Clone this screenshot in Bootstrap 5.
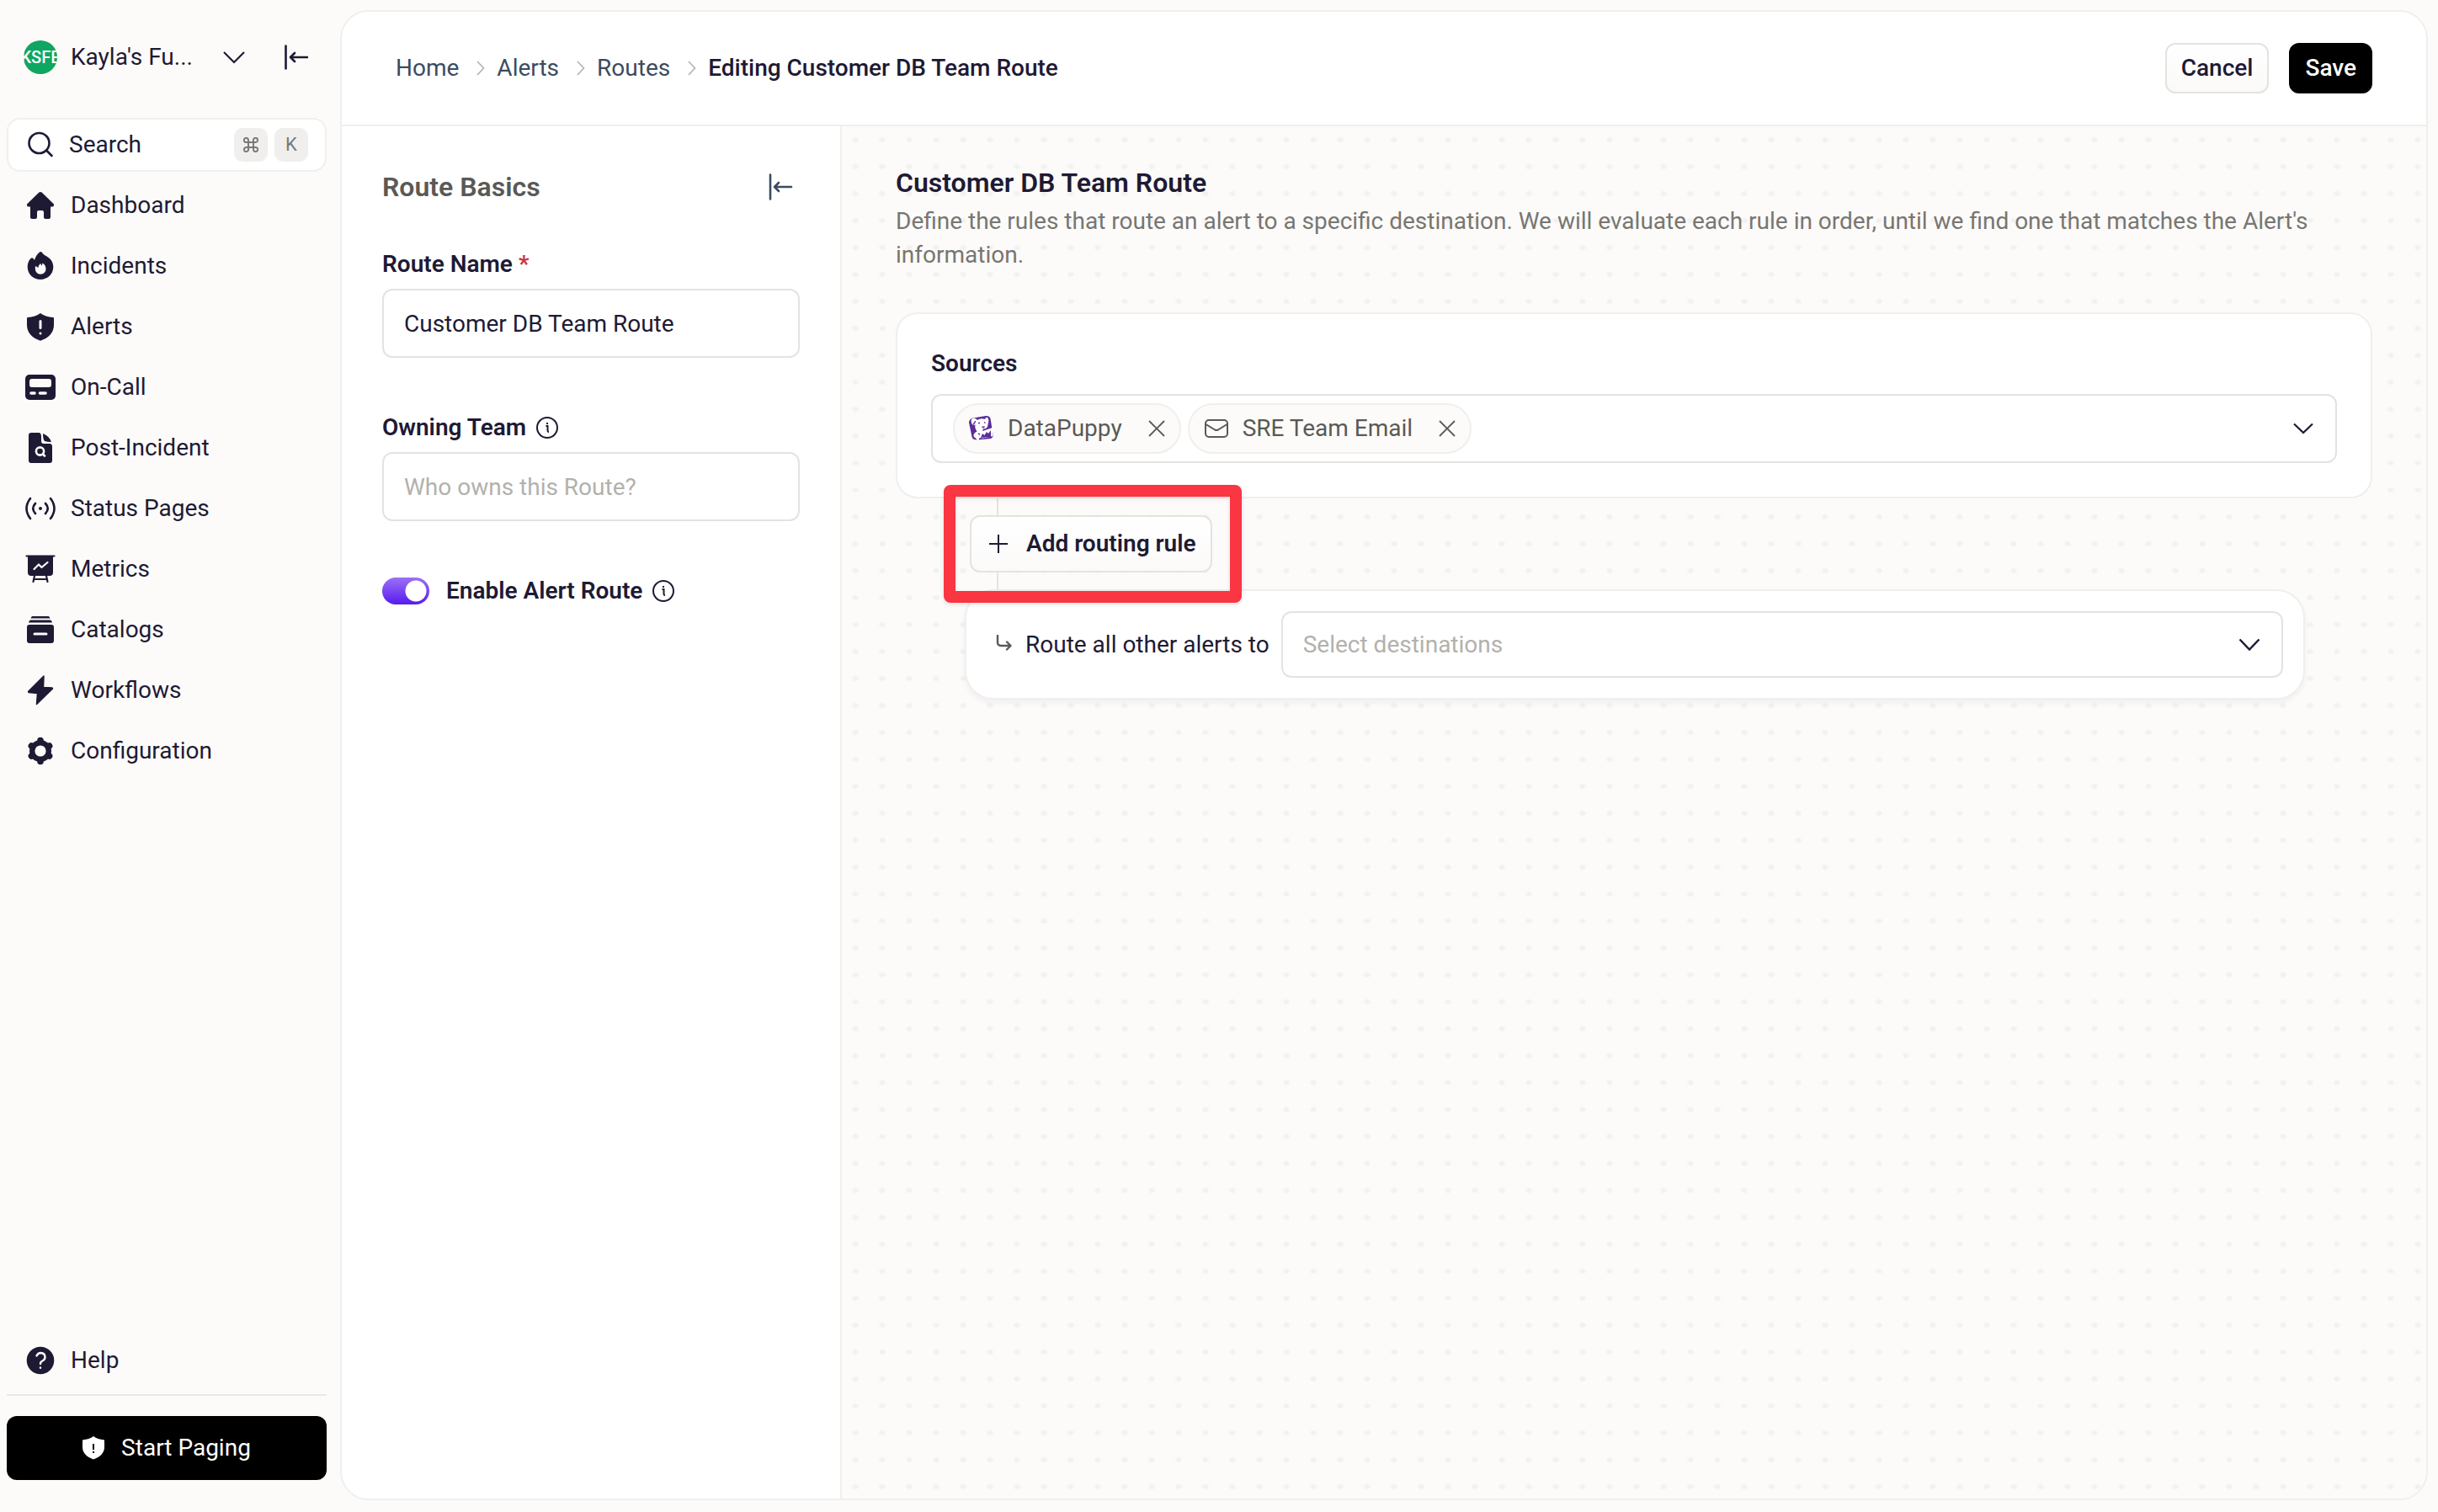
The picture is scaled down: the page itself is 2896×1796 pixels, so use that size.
<!DOCTYPE html>
<html lang="en">
<head>
<meta charset="utf-8">
<meta name="viewport" content="width=device-width, initial-scale=1">
<title>Editing Customer DB Team Route</title>
<link href="https://cdn.jsdelivr.net/npm/bootstrap@5.3.0/dist/css/bootstrap.min.css" rel="stylesheet">
<style>
:root{--ink:#1e1a34;--paper:#fcfbf9;--line:#f0efee;--field:#e4e3df;--slate:#3d4b60}
body{font-family:Roboto,"Liberation Sans",sans-serif;font-size:28px;line-height:40px;color:var(--ink);background:var(--paper)}
svg{display:block;flex:none}
a{color:inherit;text-decoration:none}
.sidebar{width:404px;padding:48px 16px 38px 8px;flex:none}
.workspace{padding:0 22px 0 20px;margin-bottom:52px;gap:16px}
.avatar{width:40px;height:40px;border-radius:50%;background:#0fa661;color:#fff;font-size:20px;font-weight:500;overflow:hidden;flex:none}
.plain{border:0;background:none;padding:0;color:inherit}
.fold{margin-left:29px}
.searchbox{height:64px;border:2px solid var(--line);border-radius:16px;background:#fff;padding:0 20px;margin-bottom:4px;color:inherit}
.keycap{width:40px;height:40px;border-radius:10px;background:#f0efee;color:#7a7976;font-size:22px;font-family:inherit;padding:0}
.side-link{height:72px;padding-left:22px;gap:18px}
.rule{height:2px;background:#e5e7ea;margin:4px 0 24px}
.paging{height:76px;border-radius:12px;background:#000;color:#fff;border:0;gap:20px}
.panel{margin:12px 12px 14px 0;border:2px solid var(--line);border-radius:34px;background:#fff;overflow:hidden}
.topbar{height:136px;border-bottom:2px solid var(--line);padding:0 64px}
.crumbs{gap:14px;color:var(--slate)}
.crumbs svg{margin-left:7px}
.crumbs .current{color:var(--ink);font-weight:500}
.action{height:60px;border-radius:12px;padding:0 17px;font-weight:500;border:2px solid var(--field);background:linear-gradient(#fff,#fbfaf9);color:var(--ink)}
.action-dark{background:#000;border-color:#000;color:#fff}
.basics{width:594px;flex:none;border-right:2px solid var(--line);padding:52px 48px}
.basics h2{font-size:32px;line-height:40px;font-weight:600;color:#5a5955;margin:0}
.basics-head{margin-bottom:52px;padding-right:8px}
.basics-head .plain{color:var(--slate)}
.field-label{font-weight:600;margin-bottom:9px;gap:12px}
.required{color:#c9363f}
.field,.field:focus{height:82px;border:2px solid var(--field);border-radius:12px;font-size:28px;padding:0 24px;color:var(--ink);background-color:#fff;margin-bottom:63px}
.field::placeholder{color:#b2b1ac;opacity:1}
.toggle.form-check-input{width:56px;height:32px;margin:0;border:0;border-radius:16px;background:radial-gradient(circle at 40px 16px,#fff 12px,transparent 13px),linear-gradient(#9c70f7,#571bee)}
.canvas{padding:45px 64px;background:radial-gradient(ellipse 5px 4px at center,#f2f1f0 40%,transparent 100%) 0 0/32px 32px,var(--paper)}
.canvas h1{font-size:32px;line-height:44px;font-weight:600;margin:0 0 4px}
.intro{color:#777672;margin-bottom:48px}
.sources{border:2px solid var(--line);border-radius:26px;background:#fff;padding:39px 40px 40px}
.sources h2{font-size:28px;line-height:40px;font-weight:600;margin:0 0 16px}
.picker{height:82px;border:2px solid var(--field);border-radius:12px;padding:0 26px 0 24px;gap:8px}
.chip{height:60px;border:2px solid var(--line);border-radius:30px;background:var(--paper);padding:0 17px;color:#5a5955;gap:16px}
.chip .plain{margin-left:15px}
.step{padding:20px 0 20px 88px}
.step::before{content:"";position:absolute;left:120px;top:0;bottom:0;width:2px;background:var(--field)}
.add{height:68px;border:2px solid var(--field);border-radius:12px;background:linear-gradient(#fff,#fbfaf9);padding:0 17px 0 19px;font-weight:600;color:var(--ink);gap:20px}
.highlight{position:absolute;left:57px;top:-16px;width:354px;height:140px;border:14px solid #f93642;border-radius:8px;box-shadow:0 2px 5px rgba(0,0,0,.12),inset 0 2px 5px rgba(0,0,0,.12);pointer-events:none;z-index:2}
.fallback{margin:0 80px 0 82px;border:2px solid var(--line);border-radius:34px;background:#fff;padding:24px 24px 24px 34px;box-shadow:0 4px 6px rgba(30,26,52,.05)}
.fallback label{margin-right:14px}
.dest,.dest:focus{height:79px;border:2px solid var(--field);border-radius:12px;padding:0 24px;font-size:28px;color:#b2b1ac;background:#fff url("data:image/svg+xml,%3Csvg xmlns='http://www.w3.org/2000/svg' viewBox='0 0 26 16'%3E%3Cpath d='M1.5 1.5 13 13.5 24.5 1.5' fill='none' stroke='%231e1a34' stroke-width='2.4'/%3E%3C/svg%3E") no-repeat right 25px center/26px 16px}
</style>
<script src="https://cdn.jsdelivr.net/npm/bootstrap@5.3.0/dist/js/bootstrap.bundle.min.js" defer></script>
</head>
<body class="d-flex min-vh-100">
<aside class="sidebar d-flex flex-column">
  <div class="workspace d-flex align-items-center">
    <span class="avatar d-flex align-items-center justify-content-center">KSFE</span>
    <button class="plain d-flex align-items-center flex-grow-1 justify-content-between" type="button">Kayla's Fu...
      <svg width="26" height="16" viewBox="0 0 26 16" fill="none" stroke="currentColor" stroke-width="2.2"><path d="M1 2 13 14 25 2"/></svg></button>
    <button class="plain fold" type="button" aria-label="Collapse sidebar"><svg width="30" height="32" viewBox="0 0 30 32" fill="none" stroke="currentColor" stroke-width="2.6" stroke-linecap="round" stroke-linejoin="round"><path d="M3.500 2.500v27M29 16H9M14 11l-5 5 5 5"/></svg></button>
  </div>
  <button class="searchbox d-flex align-items-center text-start" type="button">
    <svg width="36" height="36" viewBox="0 0 36 36" fill="none" stroke="currentColor" stroke-width="2.6" stroke-linecap="round"><circle cx="16.500" cy="16" r="12"/><path d="M25 24.500 31.500 31"/></svg>
    <span class="flex-grow-1 ms-3">Search</span>
    <kbd class="keycap d-flex align-items-center justify-content-center me-2"><svg width="18" height="18" viewBox="0 0 18 18" fill="none" stroke="currentColor" stroke-width="2"><path d="M6 6h6v6H6zM6 6H4a2.600 2.600 0 1 1 2-2.500zM12 6V4a2.600 2.600 0 1 1 2.500 2zM12 12h2a2.600 2.600 0 1 1-2 2.500zM6 12v2a2.600 2.600 0 1 1-2.500-2z"/></svg></kbd>
    <kbd class="keycap d-flex align-items-center justify-content-center">K</kbd>
  </button>
  <nav class="d-flex flex-column flex-grow-1">
    <a href="#" class="side-link d-flex align-items-center"><svg width="36" height="36" viewBox="0 0 36 36" fill="currentColor"><path d="M16.400 2.600q1.600-1.400 3.200 0L33.500 16q1.200 1.400-.2 3.200l-3.300.6V32q0 2-2 2h-4q-2 0-2-2v-6q0-2-2-2h-4q-2 0-2 2v6q0 2-2 2H8q-2 0-2-2V19.800l-3.300-.6Q1.300 17.400 2.500 16z"/></svg>Dashboard</a>
    <a href="#" class="side-link d-flex align-items-center"><svg width="36" height="36" viewBox="0 0 36 36" fill="currentColor" fill-rule="evenodd"><path d="M17 1.500q1.500-1 3 .5c1 2 3 3 5.500 4.500 5 3 7.800 7 7.800 12.500C33.300 27.500 26.500 34 18 34S2.700 27.500 2.700 19c0-4 1.300-7.500 3.800-10 1-1 2-1 3 0l1.500 2c1-4 3-7 6-9.500zM18 15c-1.500 1.500-2.500 3-2.500 5-1-.8-2-1.500-3.500-1.800-1 5 1.500 9.500 6 9.500 4 0 6.500-2.800 6.500-6.200 0-3.500-1.500-5.500-4-7-.3 1.500-.5 2.500-1 3z"/></svg>Incidents</a>
    <a href="#" class="side-link d-flex align-items-center"><svg width="36" height="36" viewBox="0 0 36 36"><path fill="currentColor" d="M18 2c4 3 9 4.800 15 5q1 0 1 1v8c0 9-6 15.500-16 18.700C8 31.500 2 25 2 16V8q0-1 1-1c6-.2 11-2 15-5z"/><path stroke="#fcfbf9" stroke-width="3" stroke-linecap="round" d="M18 11.500v8M18 26v.1"/></svg>Alerts</a>
    <a href="#" class="side-link d-flex align-items-center"><svg width="36" height="36" viewBox="0 0 36 36"><rect y="3" width="36" height="30" rx="5" fill="currentColor"/><path fill="#fcfbf9" d="M8 8h20q3 0 3 3v4q0 3-3 3H8q-3 0-3-3v-4q0-3 3-3z"/><path stroke="#fcfbf9" stroke-width="3.600" stroke-linecap="round" d="M7 25h4M17.500 25H24"/></svg>On-Call</a>
    <a href="#" class="side-link d-flex align-items-center"><svg width="36" height="36" viewBox="0 0 36 36"><path fill="currentColor" d="M7 0h10q2 1 2 4v6q0 3 3 3h8q2 1 2 3v17q0 3-3 3H7q-3 0-3-3V3q0-3 3-3zM21 1c5 2 8.500 5.500 10 10q-5 0-8-1-2-2-2-9z"/><g fill="none" stroke="#fcfbf9" stroke-width="2.600" stroke-linecap="round"><circle cx="17.500" cy="22" r="4.600"/><path d="m21 25.500 2 2"/></g></svg>Post-Incident</a>
    <a href="#" class="side-link d-flex align-items-center"><svg width="36" height="36" viewBox="0 0 36 36" fill="none" stroke="currentColor" stroke-width="2.600" stroke-linecap="round"><path d="M6 6q-9 12 0 24M12 12q-5.500 6 0 12M30 6q9 12 0 24M24 12q5.500 6 0 12"/><circle cx="18" cy="18" r="2" fill="currentColor" stroke="none"/></svg>Status Pages</a>
    <a href="#" class="side-link d-flex align-items-center"><svg width="36" height="36" viewBox="0 0 36 36" fill="none" stroke-linecap="round" stroke-linejoin="round"><path fill="currentColor" d="M3 2h30v20q0 4-4 4H7q-4 0-4-4z"/><path stroke="currentColor" stroke-width="2.200" d="M1.500 2.500h33M11 26l-1.500 7M25 26l1.500 7M10.500 30h15"/><path stroke="#fcfbf9" stroke-width="2.200" d="m10.500 18 5.500-5.500 3.500 3.500 7-6"/></svg>Metrics</a>
    <a href="#" class="side-link d-flex align-items-center"><svg width="36" height="36" viewBox="0 0 36 36"><path fill="currentColor" d="M8.500 2h19q1.500 0 2 2.500h-23q.5-2.500 2-2.500zM6 6.500h24q1.500.5 2 3H4q.5-2.500 2-3zM5 12h26q3 0 3 3v16q0 3-3 3H5q-3 0-3-3V15q0-3 3-3z"/><path stroke="#fcfbf9" stroke-width="3" stroke-linecap="round" d="M11 23h14"/></svg>Catalogs</a>
    <a href="#" class="side-link d-flex align-items-center"><svg width="36" height="36" viewBox="0 0 36 36" fill="currentColor" stroke="currentColor" stroke-width="1.500" stroke-linejoin="round"><path d="M22 1 3.500 19.500 4 20.500l10.500 1L13.500 34.500 32.500 16l-.5-1-10.500-.5z"/></svg>Workflows</a>
    <a href="#" class="side-link d-flex align-items-center"><svg width="36" height="36" viewBox="0 0 36 36"><circle cx="18" cy="18" r="9.800" fill="none" stroke="currentColor" stroke-width="6.400"/><g stroke="currentColor" stroke-width="7.600" stroke-linecap="round"><path d="M18 5.600v1M18 29.400v1M7.400 11.900l.8.500M27.800 23.600l.8.500M7.400 24.100l.8-.5M27.800 12.400l.8-.5"/></g></svg>Configuration</a>
  </nav>
  <a href="#" class="side-link d-flex align-items-center"><svg width="36" height="36" viewBox="0 0 36 36"><circle cx="18" cy="18" r="16.300" fill="currentColor"/><path fill="none" stroke="#fcfbf9" stroke-width="2.400" stroke-linecap="round" stroke-linejoin="round" d="M13.500 12.500q1.500-3.500 5-3.500 5 .5 5 5 0 3-3 4.500-2.500 1-2.500 3.500M18 26.500v.2"/></svg>Help</a>
  <div class="rule"></div>
  <button class="paging d-flex align-items-center justify-content-center" type="button"><svg width="26" height="28" viewBox="0 0 26 28"><path fill="#fff" d="M13 0c3.500 2.700 7.500 4 12 4.200q1 0 1 1V13c0 7-5 11.500-13 14.500C5 24.500 0 20 0 13V5.200q0-1 1-1C5.500 4 9.500 2.700 13 0z"/><path stroke="#000" stroke-width="2" d="M13 9v7M13 18v2"/></svg>Start Paging</button>
</aside>
<main class="panel flex-grow-1 d-flex flex-column">
  <header class="topbar d-flex align-items-center justify-content-between">
    <nav class="crumbs d-flex align-items-center" aria-label="breadcrumb">
      <a href="#">Home</a><svg width="10" height="18" viewBox="0 0 10 18" fill="none" stroke="#b2b1ac" stroke-width="1.600"><path d="m1 1 7.500 8L1 17"/></svg>
      <a href="#">Alerts</a><svg width="10" height="18" viewBox="0 0 10 18" fill="none" stroke="#b2b1ac" stroke-width="1.600"><path d="m1 1 7.500 8L1 17"/></svg>
      <a href="#">Routes</a><svg width="10" height="18" viewBox="0 0 10 18" fill="none" stroke="#b2b1ac" stroke-width="1.600"><path d="m1 1 7.500 8L1 17"/></svg>
      <span class="current">Editing Customer DB Team Route</span>
    </nav>
    <div class="d-flex gap-4"><button class="action" type="button">Cancel</button><button class="action action-dark" type="button">Save</button></div>
  </header>
  <div class="d-flex flex-grow-1">
    <section class="basics">
      <div class="basics-head d-flex align-items-center justify-content-between"><h2>Route Basics</h2>
        <button class="plain" type="button" aria-label="Collapse panel"><svg width="30" height="34" viewBox="0 0 30 34" fill="none" stroke="currentColor" stroke-width="2.600" stroke-linecap="round" stroke-linejoin="round"><path d="M3 2.500v29M28 17H8M13 12l-5 5 5 5"/></svg></button></div>
      <label class="field-label d-block" for="routeName">Route Name <span class="required">*</span></label>
      <input class="form-control field" id="routeName" type="text" value="Customer DB Team Route">
      <label class="field-label d-flex align-items-center" for="team">Owning Team <svg width="26" height="26" viewBox="0 0 26 26" fill="none" stroke="currentColor" stroke-width="2"><circle cx="13" cy="13" r="12"/><path d="M11.500 11h2v5q0 2 1.500 2M13 7v2"/></svg></label>
      <input class="form-control field" id="team" type="text" placeholder="Who owns this Route?">
      <div class="d-flex align-items-center"><input class="form-check-input toggle" type="checkbox" role="switch" id="enable" checked><label class="field-label mb-0 ms-3 d-flex align-items-center ps-1" for="enable">Enable Alert Route <svg width="26" height="26" viewBox="0 0 26 26" fill="none" stroke="currentColor" stroke-width="2"><circle cx="13" cy="13" r="12"/><path d="M11.500 11h2v5q0 2 1.500 2M13 7v2"/></svg></label></div>
    </section>
    <section class="canvas flex-grow-1">
      <h1>Customer DB Team Route</h1>
      <p class="intro">Define the rules that route an alert to a specific destination. We will evaluate each rule in order, until we find one that matches the Alert's information.</p>
      <div class="sources">
        <h2>Sources</h2>
        <div class="picker d-flex align-items-center">
          <span class="chip d-flex align-items-center"><svg width="30" height="32" viewBox="0 0 30 32"><path fill="#5b2d9a" d="M5 3.500 20 1q4-.5 5.500 3l3 19q.5 4-3 5l-15 1.500Q4 29.500 3.500 26L0 9q0-4.500 5-5.500z"/><path fill="#fff" d="M3 5q3-3 6 0l1 1q4-3 9-1 1-3 3-2 2 2 1 6l-1 5q-2 3-5 2l-1 3 12-4 .5 10-12 2.500-4-.5q-1 3-1.500 4.500l-3-4q-3-1-2.500-4 1-3 4-4-3-4-2-8-3 1-4-1-1.500-3-.5-5.500z"/><path fill="#5b2d9a" d="m14 27 2-5 2.500 2 2.500-4 2 2 3-4v8z"/><path fill="none" stroke="#5b2d9a" stroke-width="1.500" d="M11 9.500h2M18 9h1.500M15.500 14q2 1 3-.5M5 11q2-1 2.500-4M11 22l2 1"/></svg>DataPuppy<button class="plain" type="button" aria-label="Remove DataPuppy"><svg width="20" height="20" viewBox="0 0 20 20" fill="none" stroke="currentColor" stroke-width="1.800"><path d="m1 1 18 18M19 1 1 19"/></svg></button></span>
          <span class="chip d-flex align-items-center"><svg width="30" height="24" viewBox="0 0 30 24" fill="none" stroke="currentColor" stroke-width="2"><rect x="2" y="2" width="26" height="20" rx="4"/><path d="M2.500 7 13 13.500q2 1 4 0L27.500 7"/></svg>SRE Team Email<button class="plain" type="button" aria-label="Remove SRE Team Email"><svg width="20" height="20" viewBox="0 0 20 20" fill="none" stroke="currentColor" stroke-width="1.800"><path d="m1 1 18 18M19 1 1 19"/></svg></button></span>
          <button class="plain ms-auto" type="button" aria-label="Show sources"><svg width="24" height="14" viewBox="0 0 24 14" fill="none" stroke="currentColor" stroke-width="2.200"><path d="M1 1.500 12 12 23 1.500"/></svg></button>
        </div>
      </div>
      <div class="step position-relative">
        <button class="add d-flex align-items-center position-relative" type="button"><svg width="26" height="26" viewBox="0 0 26 26" stroke="currentColor" stroke-width="2"><path d="M13 2v22M2 13h22"/></svg>Add routing rule</button>
        <div class="highlight"></div>
      </div>
      <div class="fallback d-flex align-items-center">
        <svg class="me-3" width="20" height="24" viewBox="0 0 20 24" fill="none" stroke="#5a5955" stroke-width="2.400" stroke-linecap="round" stroke-linejoin="round"><path d="M3 1v8q0 4 4 4h11M14 8.500l4.500 4.500-4.500 4.500"/></svg>
        <label class="text-nowrap" for="dest">Route all other alerts to</label>
        <select class="form-select dest" id="dest"><option>Select destinations</option></select>
      </div>
    </section>
  </div>
</main>
</body>
</html>
